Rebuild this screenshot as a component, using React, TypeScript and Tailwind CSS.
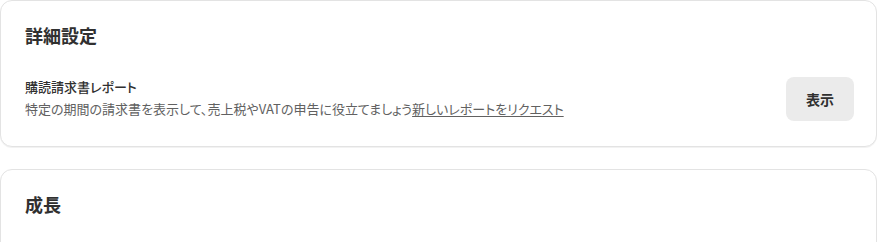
import React from 'react';

const Card: React.FC<{ children: React.ReactNode }> = ({ children }) => (
    <section className="bg-white border border-[#e3e3e3] rounded-xl shadow-[0_1px_0_rgba(0,0,0,0.05)] px-6 pt-5 pb-[25px]">
        {children}
    </section>
);

export default function App() {
    return (
        <main
            className="bg-white w-[878px] pr-px flex flex-col gap-[22px] text-[#303030] [font-feature-settings:'palt']"
            style={{ fontFamily: '"Noto Sans CJK JP", "Noto Sans", sans-serif' }}
        >
            <Card>
                <h2 className="text-[18px] leading-8 font-semibold -mt-0.5 mb-0.5">詳細設定</h2>
                <div className="mt-6 flex items-center justify-between">
                    <div>
                        <h3 className="text-[13px] leading-5 font-medium">購読請求書レポート</h3>
                        <p className="mt-0.5 text-[13px] leading-5 text-[#616161]">
                            特定の期間の請求書を表示して、売上税やVATの申告に役立てましょう
                            <a href="#" className="underline underline-offset-2">新しいレポートをリクエスト</a>
                        </p>
                    </div>
                    <button className="h-11 w-[68px] mr-[-2px] mt-0.5 rounded-lg bg-[#ebebeb] text-[14px] font-semibold text-[#303030]">
                        表示
                    </button>
                </div>
            </Card>
            <Card>
                <h2 className="text-[18px] leading-8 font-semibold -mt-0.5 mb-0.5">成長</h2>
                <div className="h-10" />
            </Card>
        </main>
    );
}
